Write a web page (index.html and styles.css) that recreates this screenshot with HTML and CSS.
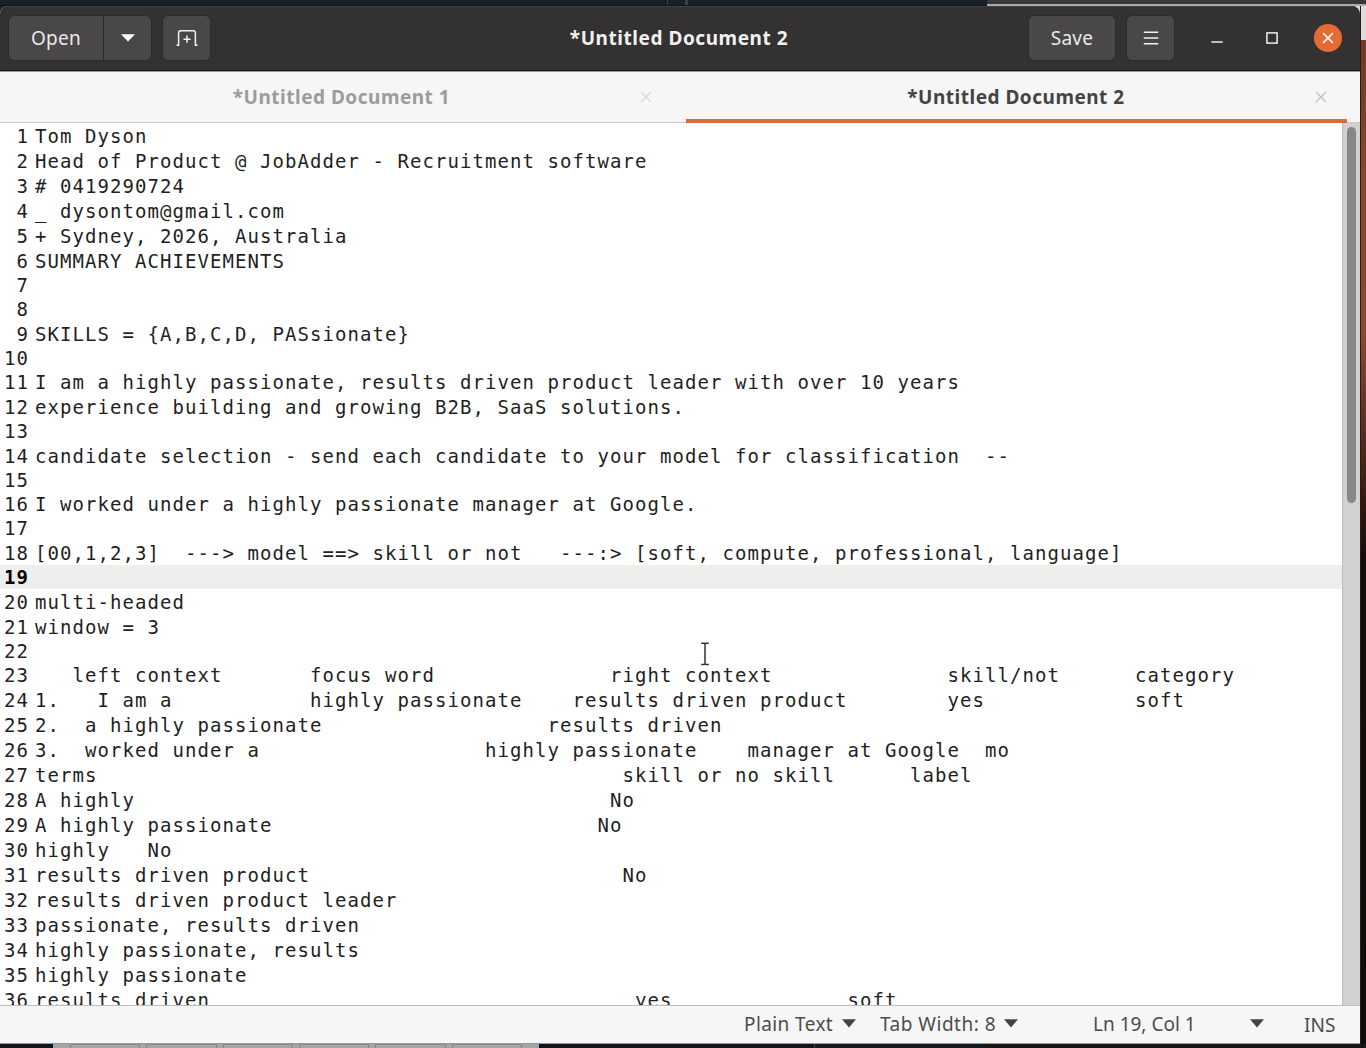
FILE: index.html
```html
<!DOCTYPE html>
<html lang="en">
<head>
<meta charset="utf-8">
<title>*Untitled Document 2</title>
<link rel="stylesheet" href="styles.css">
</head>
<body>
<div class="desktop">
  <div class="strip-top"><span class="navy"><i></i><i class="wide"></i></span><span class="grey"></span></div>
  <div class="middle">
    <main class="window">
      <header class="header">
        <div class="group">
          <button class="btn open">Open</button>
          <button class="btn drop"><svg width="14" height="8" viewBox="0 0 14 8"><path d="M0 .3h14L7 7.6z" fill="#fff"/></svg></button>
        </div>
        <button class="btn new"><svg width="22" height="18" viewBox="0 0 22 18" fill="none" stroke="#f2f2f2" stroke-width="1.5"><path d="M.5 16.2H2.6V4Q2.6 1.8 4.8 1.8H17.2Q19.4 1.8 19.4 4V16.2H21.5M11 6.6v7.2M7.4 10.2h7.2"/></svg></button>
        <h1 class="title">*Untitled Document 2</h1>
        <button class="btn save">Save</button>
        <button class="btn menu"><svg width="16" height="14" viewBox="0 0 16 14" stroke="#f2f2f2" stroke-width="1.5"><path d="M.8 1.2h14.4M.8 7h14.4M.8 12.8h14.4"/></svg></button>
        <div class="controls">
          <svg class="min" width="12" height="14" viewBox="0 0 12 14"><path d="M.3 11h11.4" stroke="#eee" stroke-width="1.6"/></svg>
          <svg class="max" width="12" height="12" viewBox="0 0 12 12"><rect x=".9" y=".9" width="10.2" height="10.2" fill="none" stroke="#eee" stroke-width="1.5"/></svg>
          <svg class="close" width="28" height="28" viewBox="0 0 28 28"><circle cx="14" cy="14" r="14" fill="#e66a35"/><path d="M9.1 9.1l9.8 9.8M18.9 9.1l-9.8 9.8" stroke="#fff3ec" stroke-width="1.8"/></svg>
        </div>
      </header>
      <nav class="tabs">
        <div class="tab"><span class="label">*Untitled Document 1</span><svg width="12" height="12" viewBox="0 0 12 12"><path d="M1 1l10 10M11 1L1 11" stroke="#d8d8d8" stroke-width="1.4"/></svg></div>
        <div class="tab active"><span class="label">*Untitled Document 2</span><svg width="12" height="12" viewBox="0 0 12 12"><path d="M1 1l10 10M11 1L1 11" stroke="#c2c2c2" stroke-width="1.4"/></svg></div>
      </nav>
      <section class="editor">
        <div class="lines">
          <div class="line"><b>1</b><span>Tom Dyson</span></div>
          <div class="line"><b>2</b><span>Head of Product @ JobAdder - Recruitment software</span></div>
          <div class="line"><b>3</b><span># 0419290724</span></div>
          <div class="line"><b>4</b><span>_ dysontom@gmail.com</span></div>
          <div class="line"><b>5</b><span>+ Sydney, 2026, Australia</span></div>
          <div class="line"><b>6</b><span>SUMMARY ACHIEVEMENTS</span></div>
          <div class="line empty"><b>7</b></div>
          <div class="line empty"><b>8</b></div>
          <div class="line"><b>9</b><span>SKILLS = {A,B,C,D, PASsionate}</span></div>
          <div class="line empty"><b>10</b></div>
          <div class="line"><b>11</b><span>I am a highly passionate, results driven product leader with over 10 years</span></div>
          <div class="line"><b>12</b><span>experience building and growing B2B, SaaS solutions.</span></div>
          <div class="line empty"><b>13</b></div>
          <div class="line"><b>14</b><span>candidate selection - send each candidate to your model for classification  --</span></div>
          <div class="line empty"><b>15</b></div>
          <div class="line"><b>16</b><span>I worked under a highly passionate manager at Google.</span></div>
          <div class="line empty"><b>17</b></div>
          <div class="line"><b>18</b><span>[00,1,2,3]  ---&gt; model ==&gt; skill or not   ---:&gt; [soft, compute, professional, language]</span></div>
          <div class="line empty current"><b>19</b></div>
          <div class="line"><b>20</b><span>multi-headed</span></div>
          <div class="line"><b>21</b><span>window = 3</span></div>
          <div class="line empty"><b>22</b></div>
          <div class="line"><b>23</b><span>   left context       focus word              right context              skill/not      category</span></div>
          <div class="line"><b>24</b><span>1.   I am a           highly passionate    results driven product        yes            soft</span></div>
          <div class="line"><b>25</b><span>2.  a highly passionate                  results driven</span></div>
          <div class="line"><b>26</b><span>3.  worked under a                  highly passionate    manager at Google  mo</span></div>
          <div class="line"><b>27</b><span>terms                                          skill or no skill      label</span></div>
          <div class="line"><b>28</b><span>A highly                                      No</span></div>
          <div class="line"><b>29</b><span>A highly passionate                          No</span></div>
          <div class="line"><b>30</b><span>highly   No</span></div>
          <div class="line"><b>31</b><span>results driven product                         No</span></div>
          <div class="line"><b>32</b><span>results driven product leader</span></div>
          <div class="line"><b>33</b><span>passionate, results driven</span></div>
          <div class="line"><b>34</b><span>highly passionate, results</span></div>
          <div class="line"><b>35</b><span>highly passionate</span></div>
          <div class="line"><b>36</b><span>results driven                                  yes              soft</span></div>
        </div>
        <div class="scrollbar"><div class="thumb"></div></div>
        <svg class="cursor" width="10" height="24" viewBox="0 0 10 24" fill="none" stroke="#333" stroke-width="1.5"><path d="M1.2 1.2H4Q5 1.2 5 2.2Q5 1.2 6 1.2H8.8M5 2v20M1.2 22.6H4Q5 22.6 5 21.6Q5 22.6 6 22.6H8.8"/></svg>
      </section>
      <footer class="status">
        <span class="s-lang">Plain Text</span>
        <svg width="14" height="9" viewBox="0 0 14 9"><path d="M0 .3h14L7 8.6z"/></svg>
        <span class="s-tab">Tab Width: 8</span>
        <svg width="14" height="9" viewBox="0 0 14 9"><path d="M0 .3h14L7 8.6z"/></svg>
        <span class="s-pos">Ln 19, Col 1</span>
        <svg width="14" height="9" viewBox="0 0 14 9"><path d="M0 .3h14L7 8.6z"/></svg>
        <span class="s-ins">INS</span>
      </footer>
    </main>
    <div class="wallpaper"></div>
  </div>
  <div class="strip-bottom"><span class="keys"><i></i><i></i><i></i><i></i><i></i><i></i></span><span class="rest"></span></div>
</div>
</body>
</html>
```
FILE: styles.css
```css
* { box-sizing: border-box; }
body { margin: 0; background: #141414; font-family: "Noto Sans", sans-serif; }
svg { display: block; flex: none; }
.desktop { width: 1366px; height: 1048px; overflow: hidden; display: flex; flex-direction: column; }
.strip-top { height: 6px; display: flex; flex: none; }
.navy { width: 987px; background: #17202c; border-bottom: 1px solid #10151b; display: flex; padding-left: 667px; gap: 17px; }
.navy i { width: 1px; background: #39424c; }
.navy .wide { width: 3px; }
.grey { flex: 1; background: #3a3738; border-bottom: 2px solid #aaa; }
.middle { flex: 1; min-height: 0; display: flex; background: linear-gradient(90deg, #17202c 50%, #dcdcdc 50%); }
.wallpaper { flex: 1; border-left: 1px solid #2c1b14; background: linear-gradient(#dcdcdc 0 34px, #71391f 34px, #87452b 160px, #8c482e 330px, #4c2518 450px, #150d0b 550px, #0d0d0e); }
.window { width: 1360px; display: flex; flex-direction: column; border-radius: 8px 8px 0 0; overflow: hidden; background: #fff; }

.header { height: 65px; flex: none; display: flex; align-items: center; padding: 0 18px 2px 9px; background: #343132; border-top: 1px solid #454243; border-bottom: 1px solid #171717; color: #f0f0f0; }
.group { display: flex; gap: 1px; }
.btn { border: 0; padding: 0; height: 44px; background: #4a4748; border-radius: 5px; color: #e9e9e9; font: 19px "Noto Sans", sans-serif; letter-spacing: .3px; display: flex; align-items: center; justify-content: center; box-shadow: 0 0 0 1px #2d2a2b; }
.open { width: 94px; border-radius: 5px 0 0 5px; }
.drop { width: 47px; border-radius: 0 5px 5px 0; }
.new { width: 47px; margin-left: 12px; }
.title { flex: 1; margin: 0; padding-left: 119px; text-align: center; font-size: 19px; font-weight: 700; letter-spacing: .55px; white-space: nowrap; }
.save { width: 86px; }
.menu { width: 47px; margin-left: 12px; }
.controls { display: flex; align-items: center; margin-left: 37px; }
.max { margin-left: 43px; }
.close { margin-left: 36px; }

.tabs { height: 52px; flex: none; display: flex; padding-right: 13px; background: #f6f6f6; border-top: 1px solid #999; box-shadow: inset 0 -1px #c9c9c9; }
.tab { width: 686px; display: flex; align-items: center; color: #9c9c9c; font-size: 19px; font-weight: 700; letter-spacing: .5px; padding: 0 34px 1px 0; }
.tab .label { flex: 1; text-align: center; padding-left: 43px; }
.tab.active { width: 661px; color: #444; border-bottom: 4px solid #da6b3c; padding: 3px 20px 0 0; }
.tab.active .label { padding-left: 31px; }

.editor { flex: 1; min-height: 0; position: relative; display: flex; overflow: hidden; border-bottom: 1px solid #bdbdbd; }
.lines { flex: 1; min-width: 0; padding-top: .4px; font-family: "DejaVu Sans Mono", monospace; font-size: 19px; letter-spacing: 1.06px; color: #1f1f1f; }
.line { height: 25px; line-height: 27px; display: flex; white-space: pre; }
.line b { width: 29px; flex: none; text-align: right; font-weight: 400; margin-right: 6px; }
.line.empty { height: 23.6px; line-height: 25.6px; }
.current { background: #eeeeed; }
.line.current b { font-weight: 700; color: #000; }
.scrollbar { width: 18px; background: #d1d1d2; border-left: 1px solid #bcbcbc; padding: 4px 0 0 4px; }
.thumb { width: 9px; height: 376px; border-radius: 5px; background: #878787; }
.cursor { position: absolute; left: 700px; top: 519px; }

.status { height: 38px; flex: none; display: flex; align-items: center; background: #f6f6f6; border-bottom: 1px solid #999; padding: 0 0 2px 744px; font-size: 19px; color: #4c4c4c; white-space: nowrap; }
.status span { flex: none; }
.status svg { fill: #444; }
.s-lang { width: 98px; letter-spacing: .4px; }
.s-tab { width: 124px; margin-left: 24px; letter-spacing: .5px; }
.s-pos { width: 157px; margin-left: 75px; }
.s-ins { margin-left: 40px; padding-top: 2px; }

.strip-bottom { height: 4px; flex: none; display: flex; background: #10151d; padding-left: 53px; }
.keys { width: 486px; background: #a5a5a5; display: flex; gap: 6px; padding: 0 17px; }
.keys i { flex: 1; border: solid #858585; border-width: 0 1px; border-top: 1px solid #8b8b8b; }
.rest { margin-left: 275px; flex: 1; border-left: 1px solid #3b4048; background: linear-gradient(90deg, #141a22 172px, #181516 172px); }
```
